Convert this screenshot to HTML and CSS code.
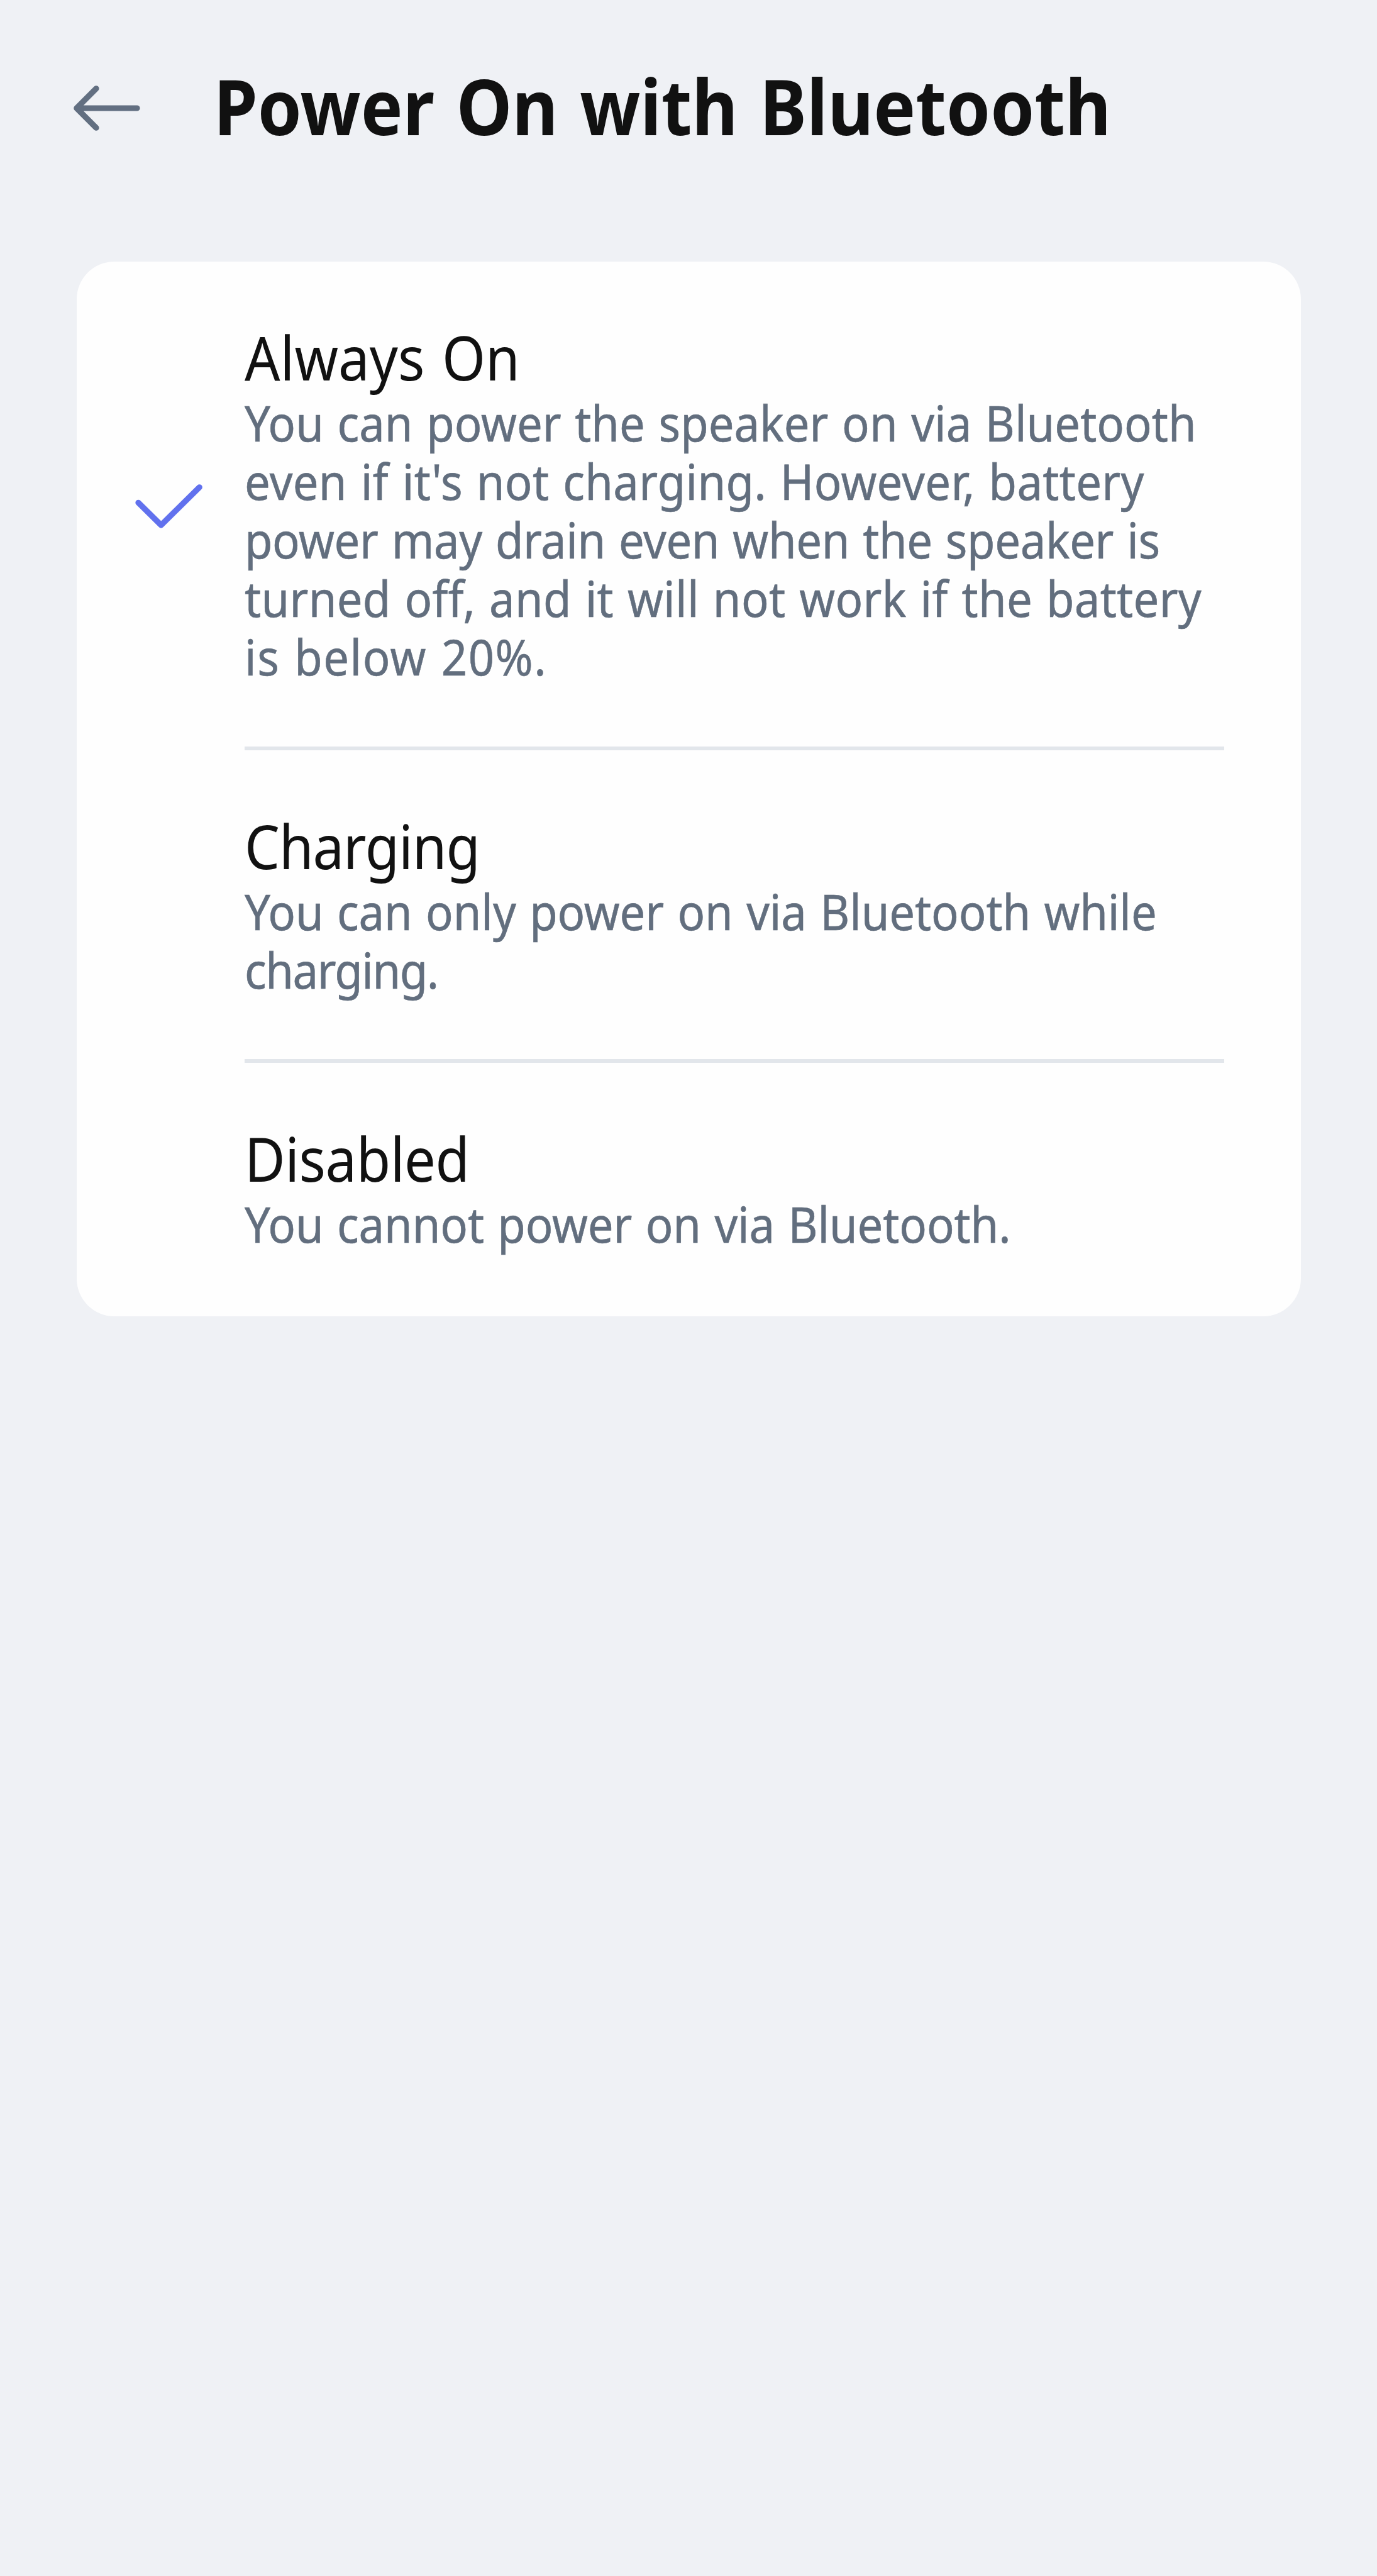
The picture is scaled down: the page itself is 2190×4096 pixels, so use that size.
FILE: index.html
```html
<!DOCTYPE html>
<html lang="en">
<head>
  <meta charset="UTF-8">
  <title>Power On with Bluetooth</title>
  <meta name="viewport" content="width=device-width, initial-scale=1.0">
  <link rel="stylesheet" href="styles.css">
</head>
<body>
  <header class="header">
    <svg class="back" viewBox="0 0 106 72" fill="none" stroke="currentColor" stroke-width="9.2" stroke-linecap="round" stroke-linejoin="round">
      <path d="M36 4.8L4.8 36L36 67.2M4.8 36H101" />
    </svg>
    <h1 class="title">Power On with Bluetooth</h1>
  </header>

  <main class="card">
    <div class="option">
      <div class="mark">
        <svg class="check" viewBox="0 0 108 70" fill="none" stroke="currentColor" stroke-width="9.3" stroke-linecap="round" stroke-linejoin="round">
          <path d="M5 29.3L41.2 65L102.2 4.8" />
        </svg>
      </div>
      <div class="content">
        <div class="name">Always On</div>
        <div class="desc">
          <span class="line">You can power the speaker on via Bluetooth</span>
          <span class="line wide">even if it's not charging. However, battery</span>
          <span class="line tight">power may drain even when the speaker is</span>
          <span class="line wide">turned off, and it will not work if the battery</span>
          <span class="line wider">is below 20%.</span>
        </div>
      </div>
    </div>

    <div class="option">
      <div class="mark"></div>
      <div class="content">
        <div class="name tighter">Charging</div>
        <div class="desc">
          <span class="line snug">You can only power on via Bluetooth while</span>
          <span class="line tightest">charging.</span>
        </div>
      </div>
    </div>

    <div class="option">
      <div class="mark"></div>
      <div class="content">
        <div class="name tight">Disabled</div>
        <div class="desc">
          <span class="line snug">You cannot power on via Bluetooth.</span>
        </div>
      </div>
    </div>
  </main>
</body>
</html>
```
FILE: styles.css
```css
body {
  margin: 0;
  min-height: 100vh;
  background-color: #eff1f5;
  font-family: "Noto Sans", sans-serif;
  color: #111111;
}

.header {
  display: flex;
  align-items: center;
  gap: 116.5px;
  padding: 85px 117px 0;
}

.back {
  width: 106px;
  height: 72px;
  margin-top: 8px;
  color: #626f81;
}

.title {
  margin: 0;
  font-size: 122px;
  font-weight: 700;
  line-height: 166px;
  white-space: nowrap;
}

/* the text is drawn slightly narrower than the font's own width */
.title,
.name,
.line {
  transform: scaleX(0.92);
  transform-origin: left;
  word-spacing: 0.05em;
}

.card {
  margin: 164.5px 121.5px 0;
  background-color: #fefefe;
  border-radius: 60px;
  overflow: hidden;
}

.option {
  display: flex;
}

.mark {
  display: flex;
  align-items: center;
  justify-content: center;
  flex: none;
  width: 267.5px;
}

.check {
  width: 108px;
  height: 70px;
  margin: 2px 0 0 27px;
  color: #6171ee;
}

.content {
  flex: 1;
  min-width: 0;
  margin-right: 122px;
  padding: 94px 0 96px;
  border-bottom: 6px solid #e2e6eb;
}

.option:last-child .content {
  padding-bottom: 101px;
  border-bottom: none;
}

.name {
  font-size: 96.3px;
  line-height: 115px;
}

.desc {
  font-size: 78.7px;
  line-height: 93.2px;
  color: #626e7e;
  -webkit-text-stroke: 0.6px #626e7e;
}

.line {
  display: block;
  word-spacing: 0.038em;
  white-space: nowrap;
}

.wide {
  letter-spacing: 0.004em;
}

.wider {
  letter-spacing: 0.02em;
}

.snug {
  letter-spacing: -0.0018em;
}

.tight {
  letter-spacing: -0.0055em;
}

.tighter {
  letter-spacing: -0.0125em;
}

.tightest {
  letter-spacing: -0.0205em;
}
```
